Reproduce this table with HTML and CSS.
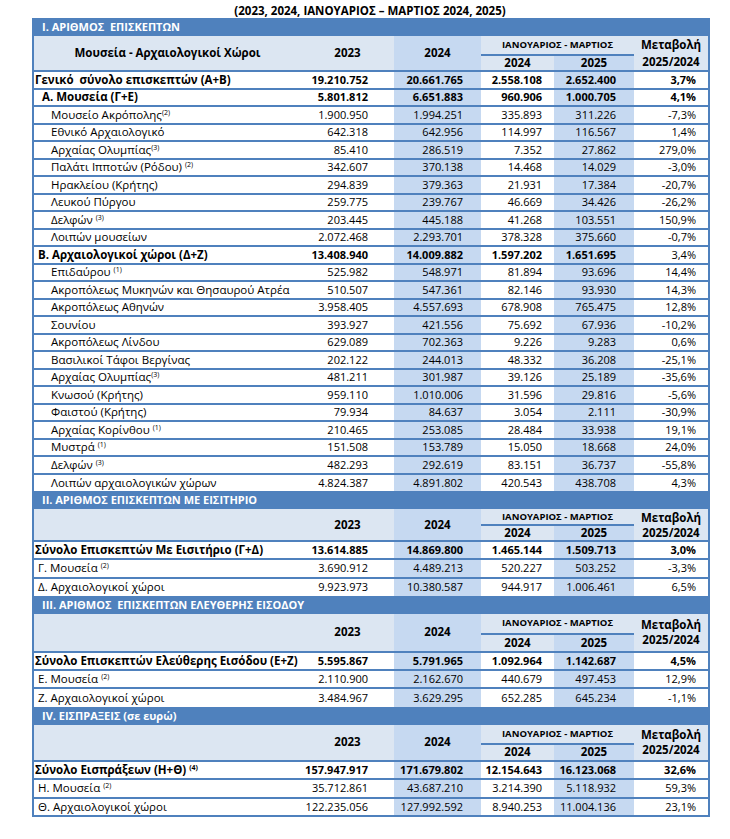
FILE: index.html
```html
<!DOCTYPE html>
<html lang="el">
<head>
<meta charset="utf-8">
<title>Επισκέπτες και εισπράξεις</title>
<link rel="stylesheet" href="styles.css">
</head>
<body>
<div class="page">
  <h1 class="title">(2023, 2024, ΙΑΝΟΥΑΡΙΟΣ – ΜΑΡΤΙΟΣ 2024, 2025)</h1>
  <table class="stats">
    <colgroup>
      <col class="c-label"><col class="c-y23"><col class="c-y24"><col class="c-j24"><col class="c-j25"><col class="c-chg">
    </colgroup>
    <tbody class="s1">
      <tr class="sec"><td colspan="6">I. ΑΡΙΘΜΟΣ&nbsp; ΕΠΙΣΚΕΠΤΩΝ</td></tr>
      <tr class="head-top">
        <th rowspan="2" class="h-label">Μουσεία - Αρχαιολογικοί Χώροι</th>
        <th rowspan="2">2023</th>
        <th rowspan="2" class="shade">2024</th>
        <th colspan="2" class="h-period">ΙΑΝΟΥΑΡΙΟΣ - ΜΑΡΤΙΟΣ</th>
        <th rowspan="2" class="h-chg">Μεταβολή<br>2025/2024</th>
      </tr>
      <tr class="head-sub"><th>2024</th><th class="shade">2025</th></tr>
      <tr class="bold"><td class="lab ind0">Γενικό&nbsp; σύνολο επισκεπτών (Α+Β)</td><td>19.210.752</td><td>20.661.765</td><td>2.558.108</td><td>2.652.400</td><td>3,7%</td></tr>
      <tr class="bold"><td class="lab ind2">Α. Μουσεία (Γ+Ε)</td><td>5.801.812</td><td>6.651.883</td><td>960.906</td><td>1.000.705</td><td>4,1%</td></tr>
      <tr><td class="lab ind3">Μουσείο Ακρόπολης<sup>(2)</sup></td><td>1.900.950</td><td>1.994.251</td><td>335.893</td><td>311.226</td><td>-7,3%</td></tr>
      <tr><td class="lab ind3">Εθνικό Αρχαιολογικό</td><td>642.318</td><td>642.956</td><td>114.997</td><td>116.567</td><td>1,4%</td></tr>
      <tr><td class="lab ind3">Αρχαίας Ολυμπίας<sup>(3)</sup></td><td>85.410</td><td>286.519</td><td>7.352</td><td>27.862</td><td>279,0%</td></tr>
      <tr><td class="lab ind3">Παλάτι Ιπποτών (Ρόδου) <sup>(2)</sup></td><td>342.607</td><td>370.138</td><td>14.468</td><td>14.029</td><td>-3,0%</td></tr>
      <tr><td class="lab ind3">Ηρακλείου (Κρήτης)</td><td>294.839</td><td>379.363</td><td>21.931</td><td>17.384</td><td>-20,7%</td></tr>
      <tr><td class="lab ind3">Λευκού Πύργου</td><td>259.775</td><td>239.767</td><td>46.669</td><td>34.426</td><td>-26,2%</td></tr>
      <tr><td class="lab ind3">Δελφών <sup>(3)</sup></td><td>203.445</td><td>445.188</td><td>41.268</td><td>103.551</td><td>150,9%</td></tr>
      <tr><td class="lab ind3">Λοιπών μουσείων</td><td>2.072.468</td><td>2.293.701</td><td>378.328</td><td>375.660</td><td>-0,7%</td></tr>
      <tr class="bold plain-chg"><td class="lab ind1">Β. Αρχαιολογικοί χώροι (Δ+Ζ)</td><td>13.408.940</td><td>14.009.882</td><td>1.597.202</td><td>1.651.695</td><td>3,4%</td></tr>
      <tr><td class="lab ind3">Επιδαύρου <sup>(1)</sup></td><td>525.982</td><td>548.971</td><td>81.894</td><td>93.696</td><td>14,4%</td></tr>
      <tr><td class="lab ind3">Ακροπόλεως Μυκηνών και Θησαυρού Ατρέα</td><td>510.507</td><td>547.361</td><td>82.146</td><td>93.930</td><td>14,3%</td></tr>
      <tr><td class="lab ind3">Ακροπόλεως Αθηνών</td><td>3.958.405</td><td>4.557.693</td><td>678.908</td><td>765.475</td><td>12,8%</td></tr>
      <tr><td class="lab ind3">Σουνίου</td><td>393.927</td><td>421.556</td><td>75.692</td><td>67.936</td><td>-10,2%</td></tr>
      <tr><td class="lab ind3">Ακροπόλεως Λίνδου</td><td>629.089</td><td>702.363</td><td>9.226</td><td>9.283</td><td>0,6%</td></tr>
      <tr><td class="lab ind3">Βασιλικοί Τάφοι Βεργίνας</td><td>202.122</td><td>244.013</td><td>48.332</td><td>36.208</td><td>-25,1%</td></tr>
      <tr><td class="lab ind3">Αρχαίας Ολυμπίας<sup>(3)</sup></td><td>481.211</td><td>301.987</td><td>39.126</td><td>25.189</td><td>-35,6%</td></tr>
      <tr><td class="lab ind3">Κνωσού (Κρήτης)</td><td>959.110</td><td>1.010.006</td><td>31.596</td><td>29.816</td><td>-5,6%</td></tr>
      <tr><td class="lab ind3">Φαιστού (Κρήτης)</td><td>79.934</td><td>84.637</td><td>3.054</td><td>2.111</td><td>-30,9%</td></tr>
      <tr><td class="lab ind3">Αρχαίας Κορίνθου <sup>(1)</sup></td><td>210.465</td><td>253.085</td><td>28.484</td><td>33.938</td><td>19,1%</td></tr>
      <tr><td class="lab ind3">Μυστρά <sup>(1)</sup></td><td>151.508</td><td>153.789</td><td>15.050</td><td>18.668</td><td>24,0%</td></tr>
      <tr><td class="lab ind3">Δελφών <sup>(3)</sup></td><td>482.293</td><td>292.619</td><td>83.151</td><td>36.737</td><td>-55,8%</td></tr>
      <tr><td class="lab ind3">Λοιπών αρχαιολογικών χώρων</td><td>4.824.387</td><td>4.891.802</td><td>420.543</td><td>438.708</td><td>4,3%</td></tr>
    </tbody>
    <tbody class="s2">
      <tr class="sec"><td colspan="6">II. ΑΡΙΘΜΟΣ ΕΠΙΣΚΕΠΤΩΝ ΜΕ ΕΙΣΙΤΗΡΙΟ</td></tr>
      <tr class="head-top">
        <th rowspan="2" class="h-label"></th>
        <th rowspan="2">2023</th>
        <th rowspan="2" class="shade">2024</th>
        <th colspan="2" class="h-period">ΙΑΝΟΥΑΡΙΟΣ - ΜΑΡΤΙΟΣ</th>
        <th rowspan="2" class="h-chg">Μεταβολή<br>2025/2024</th>
      </tr>
      <tr class="head-sub"><th>2024</th><th class="shade">2025</th></tr>
      <tr class="bold"><td class="lab ind0">Σύνολο Επισκεπτών Με Εισιτήριο (Γ+Δ)</td><td>13.614.885</td><td>14.869.800</td><td>1.465.144</td><td>1.509.713</td><td>3,0%</td></tr>
      <tr><td class="lab ind1">Γ. Μουσεία <sup>(2)</sup></td><td>3.690.912</td><td>4.489.213</td><td>520.227</td><td>503.252</td><td>-3,3%</td></tr>
      <tr><td class="lab ind1">Δ. Αρχαιολογικοί χώροι</td><td>9.923.973</td><td>10.380.587</td><td>944.917</td><td>1.006.461</td><td>6,5%</td></tr>
    </tbody>
    <tbody class="s3">
      <tr class="sec"><td colspan="6">III. ΑΡΙΘΜΟΣ&nbsp; ΕΠΙΣΚΕΠΤΩΝ ΕΛΕΥΘΕΡΗΣ ΕΙΣΟΔΟΥ</td></tr>
      <tr class="head-top">
        <th rowspan="2" class="h-label"></th>
        <th rowspan="2">2023</th>
        <th rowspan="2" class="shade">2024</th>
        <th colspan="2" class="h-period">ΙΑΝΟΥΑΡΙΟΣ - ΜΑΡΤΙΟΣ</th>
        <th rowspan="2" class="h-chg">Μεταβολή<br>2025/2024</th>
      </tr>
      <tr class="head-sub"><th>2024</th><th class="shade">2025</th></tr>
      <tr class="bold"><td class="lab ind0">Σύνολο Επισκεπτών Ελεύθερης Εισόδου (Ε+Ζ)</td><td>5.595.867</td><td>5.791.965</td><td>1.092.964</td><td>1.142.687</td><td>4,5%</td></tr>
      <tr><td class="lab ind1">Ε. Μουσεία <sup>(2)</sup></td><td>2.110.900</td><td>2.162.670</td><td>440.679</td><td>497.453</td><td>12,9%</td></tr>
      <tr><td class="lab ind1">Ζ. Αρχαιολογικοί χώροι</td><td>3.484.967</td><td>3.629.295</td><td>652.285</td><td>645.234</td><td>-1,1%</td></tr>
    </tbody>
    <tbody class="s4">
      <tr class="sec"><td colspan="6">IV. ΕΙΣΠΡΑΞΕΙΣ (σε ευρώ)</td></tr>
      <tr class="head-top">
        <th rowspan="2" class="h-label"></th>
        <th rowspan="2">2023</th>
        <th rowspan="2" class="shade">2024</th>
        <th colspan="2" class="h-period">ΙΑΝΟΥΑΡΙΟΣ - ΜΑΡΤΙΟΣ</th>
        <th rowspan="2" class="h-chg">Μεταβολή<br>2025/2024</th>
      </tr>
      <tr class="head-sub"><th>2024</th><th class="shade">2025</th></tr>
      <tr class="bold"><td class="lab ind0">Σύνολο Εισπράξεων (Η+Θ) <sup>(4)</sup></td><td>157.947.917</td><td>171.679.802</td><td>12.154.643</td><td>16.123.068</td><td>32,6%</td></tr>
      <tr><td class="lab ind1">Η. Μουσεία <sup>(2)</sup></td><td>35.712.861</td><td>43.687.210</td><td>3.214.390</td><td>5.118.932</td><td>59,3%</td></tr>
      <tr><td class="lab ind1">Θ. Αρχαιολογικοί χώροι</td><td>122.235.056</td><td>127.992.592</td><td>8.940.253</td><td>11.004.136</td><td>23,1%</td></tr>
    </tbody>
  </table>
</div>
</body>
</html>
```

FILE: styles.css
```css
* { box-sizing: border-box; }

body {
  margin: 0;
  background: #ffffff;
  color: #000000;
  font-family: "Open Sans", "DejaVu Sans", sans-serif;
}

.page {
  width: 730px;
  padding: 3px 0 0 32px;
}

.title {
  width: 676px;
  margin: 0;
  height: 15px;
  text-align: center;
  font-size: 11.5px;
  font-weight: 700;
  line-height: 15px;
}

.stats {
  width: 676px;
  table-layout: fixed;
  border-collapse: collapse;
  border-left: 2px solid #4f81bd;
  border-right: 2px solid #4f81bd;
  border-bottom: 2px solid #4f81bd;
  font-size: 11px;
}

.c-label { width: 268px; }
.c-y23 { width: 93px; }
.c-y24 { width: 87px; }
.c-j24 { width: 73px; }
.c-j25 { width: 80px; }
.c-chg { width: 75px; }

.stats td,
.stats th {
  padding: 0;
  white-space: nowrap;
  overflow: hidden;
  line-height: 14px;
}

/* header */
.stats th {
  background: #dce6f2;
  font-weight: 700;
  font-size: 11.5px;
  text-align: center;
  vertical-align: middle;
}
.stats th.shade { background: #c6d9f1; }
.stats .head-sub th { border-bottom: 2px solid #4f81bd; }
.stats .head-top th[rowspan] { border-bottom: 2px solid #4f81bd; }
.stats th.h-period {
  font-size: 9.5px;
  border-bottom: 2px solid #4f81bd;
  vertical-align: middle;
}
.stats th.h-chg { line-height: 15px; }
.s1 th.h-chg { line-height: 17px; }

.s1 .head-top { height: 19px; }
.s1 .head-sub { height: 16px; }
.s2 .head-top { height: 16px; }
.s2 .head-sub { height: 15px; }
.s3 .head-top { height: 20px; }
.s3 .head-sub { height: 18px; }
.s4 .head-top { height: 19px; }
.s4 .head-sub { height: 17px; }

/* body rows */
.stats tr > td {
  border-bottom: 2px solid #4f81bd;
  text-align: right;
  vertical-align: middle;
}
.s1 tr { height: 17.5px; }
.s2 tr, .s3 tr { height: 18.3px; }
.s4 tr { height: 18.4px; }

.stats tr:last-child > td { border-bottom: 0; }

.stats tr > td:nth-child(2) { padding-right: 26px; }
.stats tr > td:nth-child(3) { padding-right: 18px; background: #c6d9f1; }
.stats tr > td:nth-child(4) { padding-right: 12px; }
.stats tr > td:nth-child(5) { padding-right: 18px; background: #c6d9f1; }
.stats tr > td:nth-child(6) { padding-right: 12px; }

/* section bars */
.stats tr.sec { height: 18px; }
.stats tr.sec > td {
  height: 18px;
  background: #4f81bd;
  color: #ffffff;
  font-weight: 700;
  font-size: 11px;
  padding: 0 0 0 8px;
  text-align: left;
  border: 0;
}

.stats td.lab {
  text-align: left;
  font-size: 11.5px;
  background: #ffffff;
}
.stats td.ind0 { padding-left: 1px; }
.stats td.ind1 { padding-left: 4px; }
.stats td.ind2 { padding-left: 8px; }
.stats td.ind3 { padding-left: 17px; }

.bold td { font-weight: 700; }
.plain-chg td:last-child { font-weight: 400; }

sup {
  font-size: 7px;
  line-height: 0;
  vertical-align: 4px;
}
```
